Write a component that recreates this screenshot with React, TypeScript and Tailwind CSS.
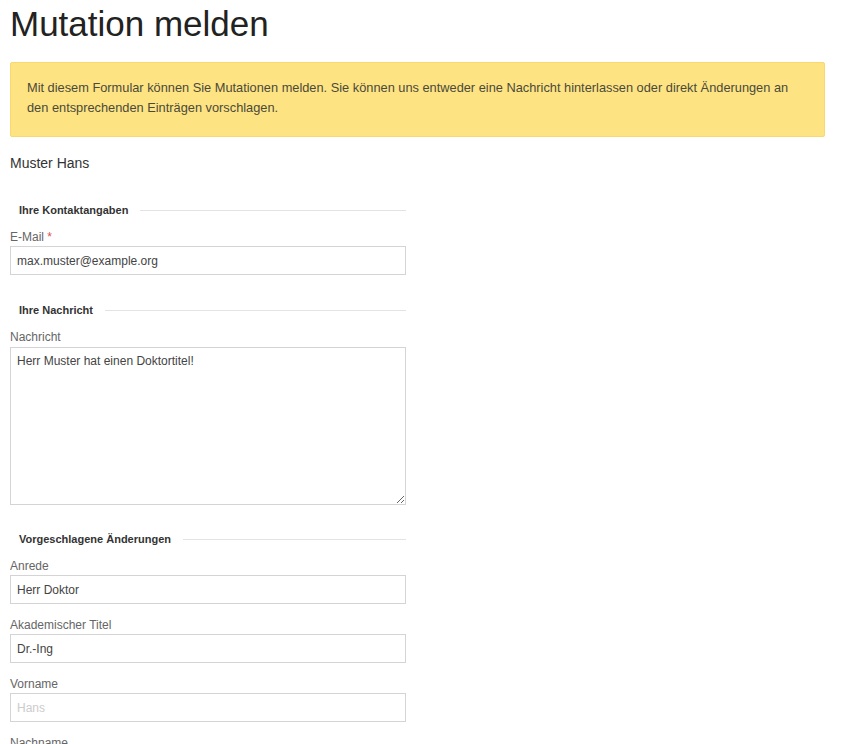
export default function App() {
  const section = (title: string) => (
    <div className="flex items-center gap-3 pl-[9px] mb-[13px]">
      <span className="text-[11px] font-bold text-[#333] leading-[14px]">{title}</span>
      <div className="flex-1 h-px bg-[#e3e3e3]" />
    </div>
  )
  const field = (label: string, value: string, placeholder = false, required = false) => (
    <div className="mb-[14px]">
      <label className="block text-[12px] text-[#666] leading-[14px] mb-[2px]">
        {label}
        {required && <span className="text-[#d9534f]"> *</span>}
      </label>
      {placeholder ? (
        <input readOnly placeholder={value} className="block w-full h-[29px] border border-[#d4d4d4] px-[6px] text-[12px] text-[#444] placeholder:text-[#ccc] outline-none" />
      ) : (
        <input readOnly value={value} className="block w-full h-[29px] border border-[#d4d4d4] px-[6px] text-[12px] text-[#444] outline-none" />
      )}
    </div>
  )
  return (
    <main className="px-[10px] pt-[3px] bg-white min-h-screen" style={{ fontFamily: '"Liberation Sans", Arial, sans-serif' }}>
      <h1 className="text-[35px] leading-[42px] text-[#222] mb-[17px]">Mutation melden</h1>
      <div className="w-[815px] bg-[#fee383] border border-[#f8d870] rounded-[2px] px-[16px] pt-[15px] pb-[18px] text-[12.8px] leading-[20px] text-[#4a4a3a]">
        Mit diesem Formular können Sie Mutationen melden. Sie können uns entweder eine Nachricht hinterlassen oder direkt Änderungen an den entsprechenden Einträgen vorschlagen.
      </div>
      <p className="mt-[17px] text-[14px] leading-[18px] text-[#333]">Muster Hans</p>
      <form className="w-[396px] mt-[31px]">
        {section('Ihre Kontaktangaben')}
        {field('E-Mail', 'max.muster@example.org', false, true)}
        <div className="h-[14px]" />
        {section('Ihre Nachricht')}
        <div className="mb-[27px]">
          <label className="block text-[12px] text-[#666] leading-[14px] mb-[3px]">Nachricht</label>
          <textarea readOnly value="Herr Muster hat einen Doktortitel!" className="block w-full h-[158px] border border-[#d4d4d4] px-[6px] py-[5px] text-[12px] leading-[16px] text-[#444] outline-none resize-y" />
        </div>
        {section('Vorgeschlagene Änderungen')}
        {field('Anrede', 'Herr Doktor')}
        {field('Akademischer Titel', 'Dr.-Ing')}
        {field('Vorname', 'Hans', true)}
        {field('Nachname', 'Muster')}
      </form>
    </main>
  )
}
